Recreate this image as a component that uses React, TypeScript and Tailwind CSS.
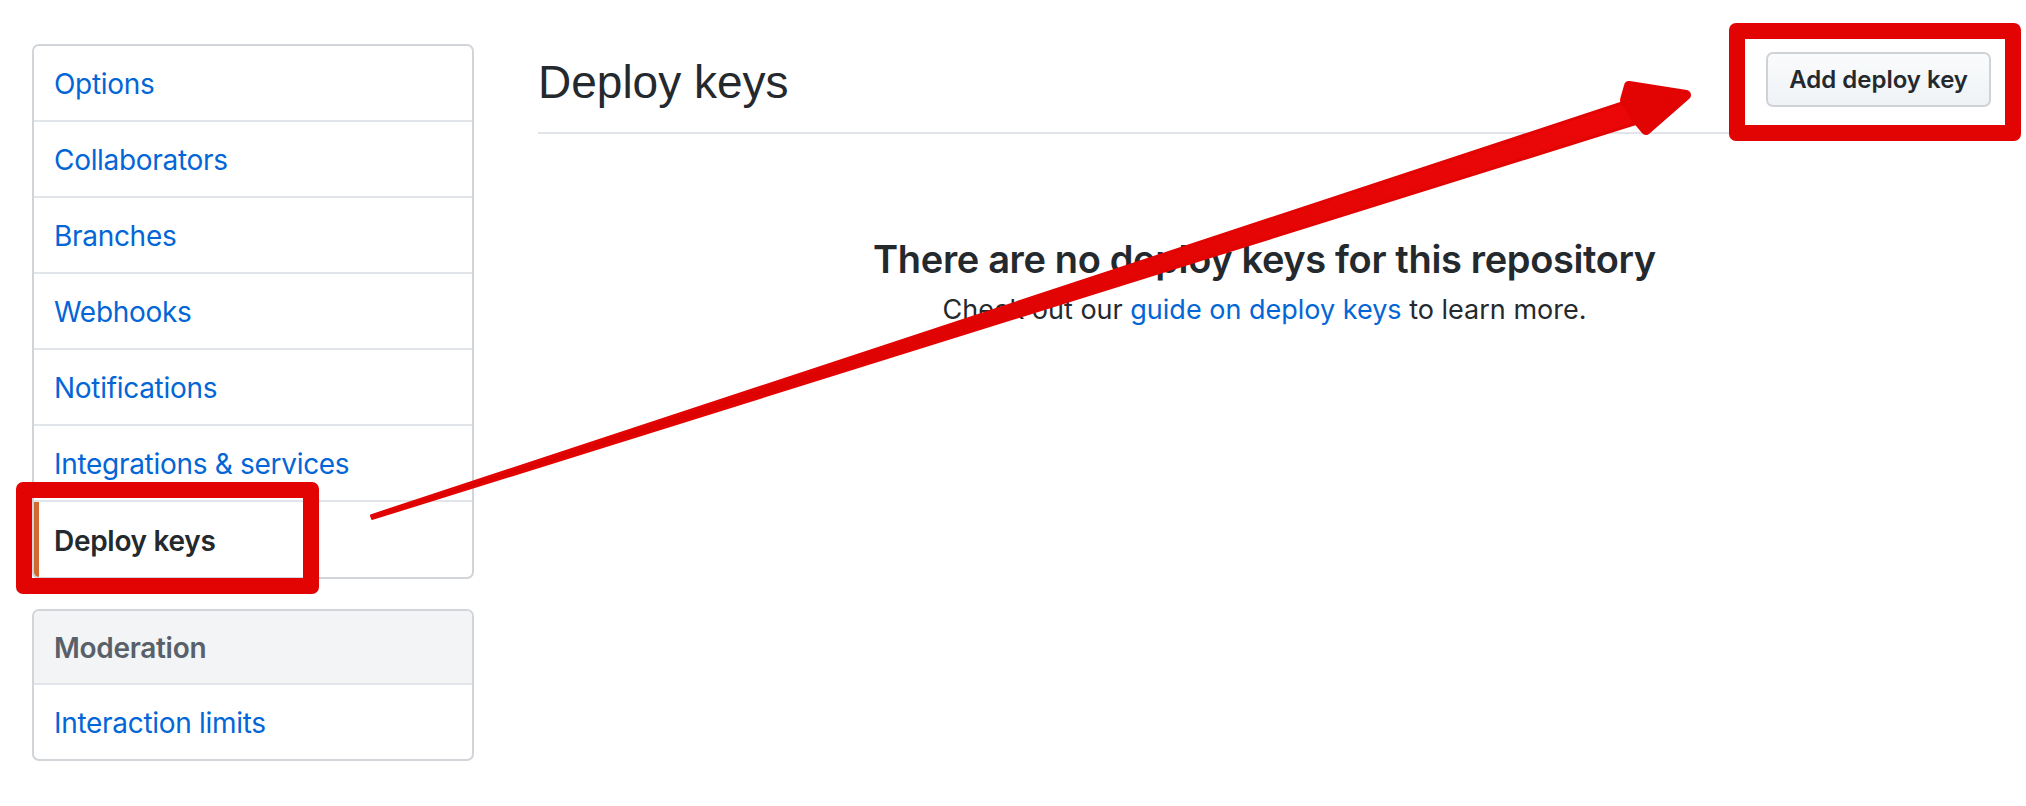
const SANS = "font-['Inter','Noto_Sans',sans-serif]";

const MENU = [
  "Options",
  "Collaborators",
  "Branches",
  "Webhooks",
  "Notifications",
  "Integrations & services",
];

function MenuRow({ label, active, last }: { label: string; active?: boolean; last?: boolean }) {
  return (
    <div
      className={`relative flex items-center pl-[20px] pt-[2px] ${
        last ? "h-[75px]" : "h-[76px] border-b-2 border-[#e1e4e8]"
      }`}
    >
      {active && <div className="absolute left-0 top-0 bottom-0 w-[5px] bg-[#d06a30]" />}
      <span
        className={`text-[28px] tracking-[-0.3px] ${
          active ? "font-semibold text-[#24292e]" : "text-[#0366d6]"
        }`}
      >
        {label}
      </span>
    </div>
  );
}

function Arrow() {
  // tail (372,517) -> tip (1692,93)
  return (
    <svg
      className="absolute inset-0 pointer-events-none"
      width={2026}
      height={806}
      viewBox="0 0 2026 806"
    >
      <defs>
        <linearGradient id="ar" x1="0" y1="0" x2="0.3" y2="1">
          <stop offset="0" stopColor="#f50a0a" />
          <stop offset="1" stopColor="#d40000" />
        </linearGradient>
      </defs>
      <polygon
        points="371.5,515.6 1625.1,101.9 1638.2,122.9 372.5,518.4"
        fill="url(#ar)"
        stroke="#e20303"
        strokeWidth={3}
        strokeLinejoin="round"
      />
      <polygon
        points="1629,86 1686,95 1646,130 1636,118 1625,100"
        fill="#e20303"
        stroke="#e20303"
        strokeWidth={10}
        strokeLinejoin="round"
      />
    </svg>
  );
}

export default function App() {
  return (
    <div className={`relative w-[2026px] h-[806px] bg-white overflow-hidden ${SANS}`}>
      <div className="flex pl-[32px] pt-[44px] pr-[35px] gap-[64px]">
        {/* Sidebar */}
        <div className="w-[442px] shrink-0 flex flex-col gap-[30px]">
          <div className="border-2 border-[#d1d5da] rounded-[7px] overflow-hidden">
            {MENU.map((m) => (
              <MenuRow key={m} label={m} />
            ))}
            <MenuRow label="Deploy keys" active last />
          </div>
          <div className="border-2 border-[#d1d5da] rounded-[7px] overflow-hidden">
            <div className="flex items-center h-[74px] pl-[20px] pt-[2px] bg-[#f3f4f6] border-b-2 border-[#e1e4e8]">
              <span className="text-[28px] tracking-[-0.3px] font-semibold text-[#586069]">Moderation</span>
            </div>
            <div className="flex items-center h-[74px] pl-[20px] pt-[2px]">
              <span className="text-[28px] tracking-[-0.3px] text-[#0366d6]">Interaction limits</span>
            </div>
          </div>
        </div>

        {/* Main */}
        <div className="flex-1 flex flex-col">
          <div className="flex items-start justify-between h-[90px] pt-[8px] border-b-2 border-[#e1e4e8]">
            <h2 className="mt-[1px] text-[46px] leading-[58px] font-normal text-[#24292e] font-['Liberation_Sans',Arial,sans-serif]">
              Deploy keys
            </h2>
            <button className="h-[55px] px-[21px] rounded-[7px] border-2 border-[#cfd3d8] bg-linear-to-b from-[#fafbfc] to-[#eff3f6] text-[24px] font-semibold text-[#24292e]">
              Add deploy key
            </button>
          </div>
          <div className="flex flex-col items-center mt-[102px]">
            <h3 className="text-[38px] leading-[47px] tracking-[-0.35px] font-semibold text-[#24292e]">
              There are no deploy keys for this repository
            </h3>
            <p className="mt-[6px] text-[27px] leading-[42px] text-[#24292e]">
              Check out our <span className="text-[#0366d6]">guide on deploy keys</span> to learn more.
            </p>
          </div>
        </div>
      </div>

      {/* Annotations */}
      <Arrow />
      <div className="absolute left-[16px] top-[482px] w-[303px] h-[112px] border-[16px] border-[#e20303] rounded-[7px]" />
      <div className="absolute left-[1729px] top-[23px] w-[292px] h-[118px] border-[16px] border-[#e20303] rounded-[7px]" />
    </div>
  );
}
